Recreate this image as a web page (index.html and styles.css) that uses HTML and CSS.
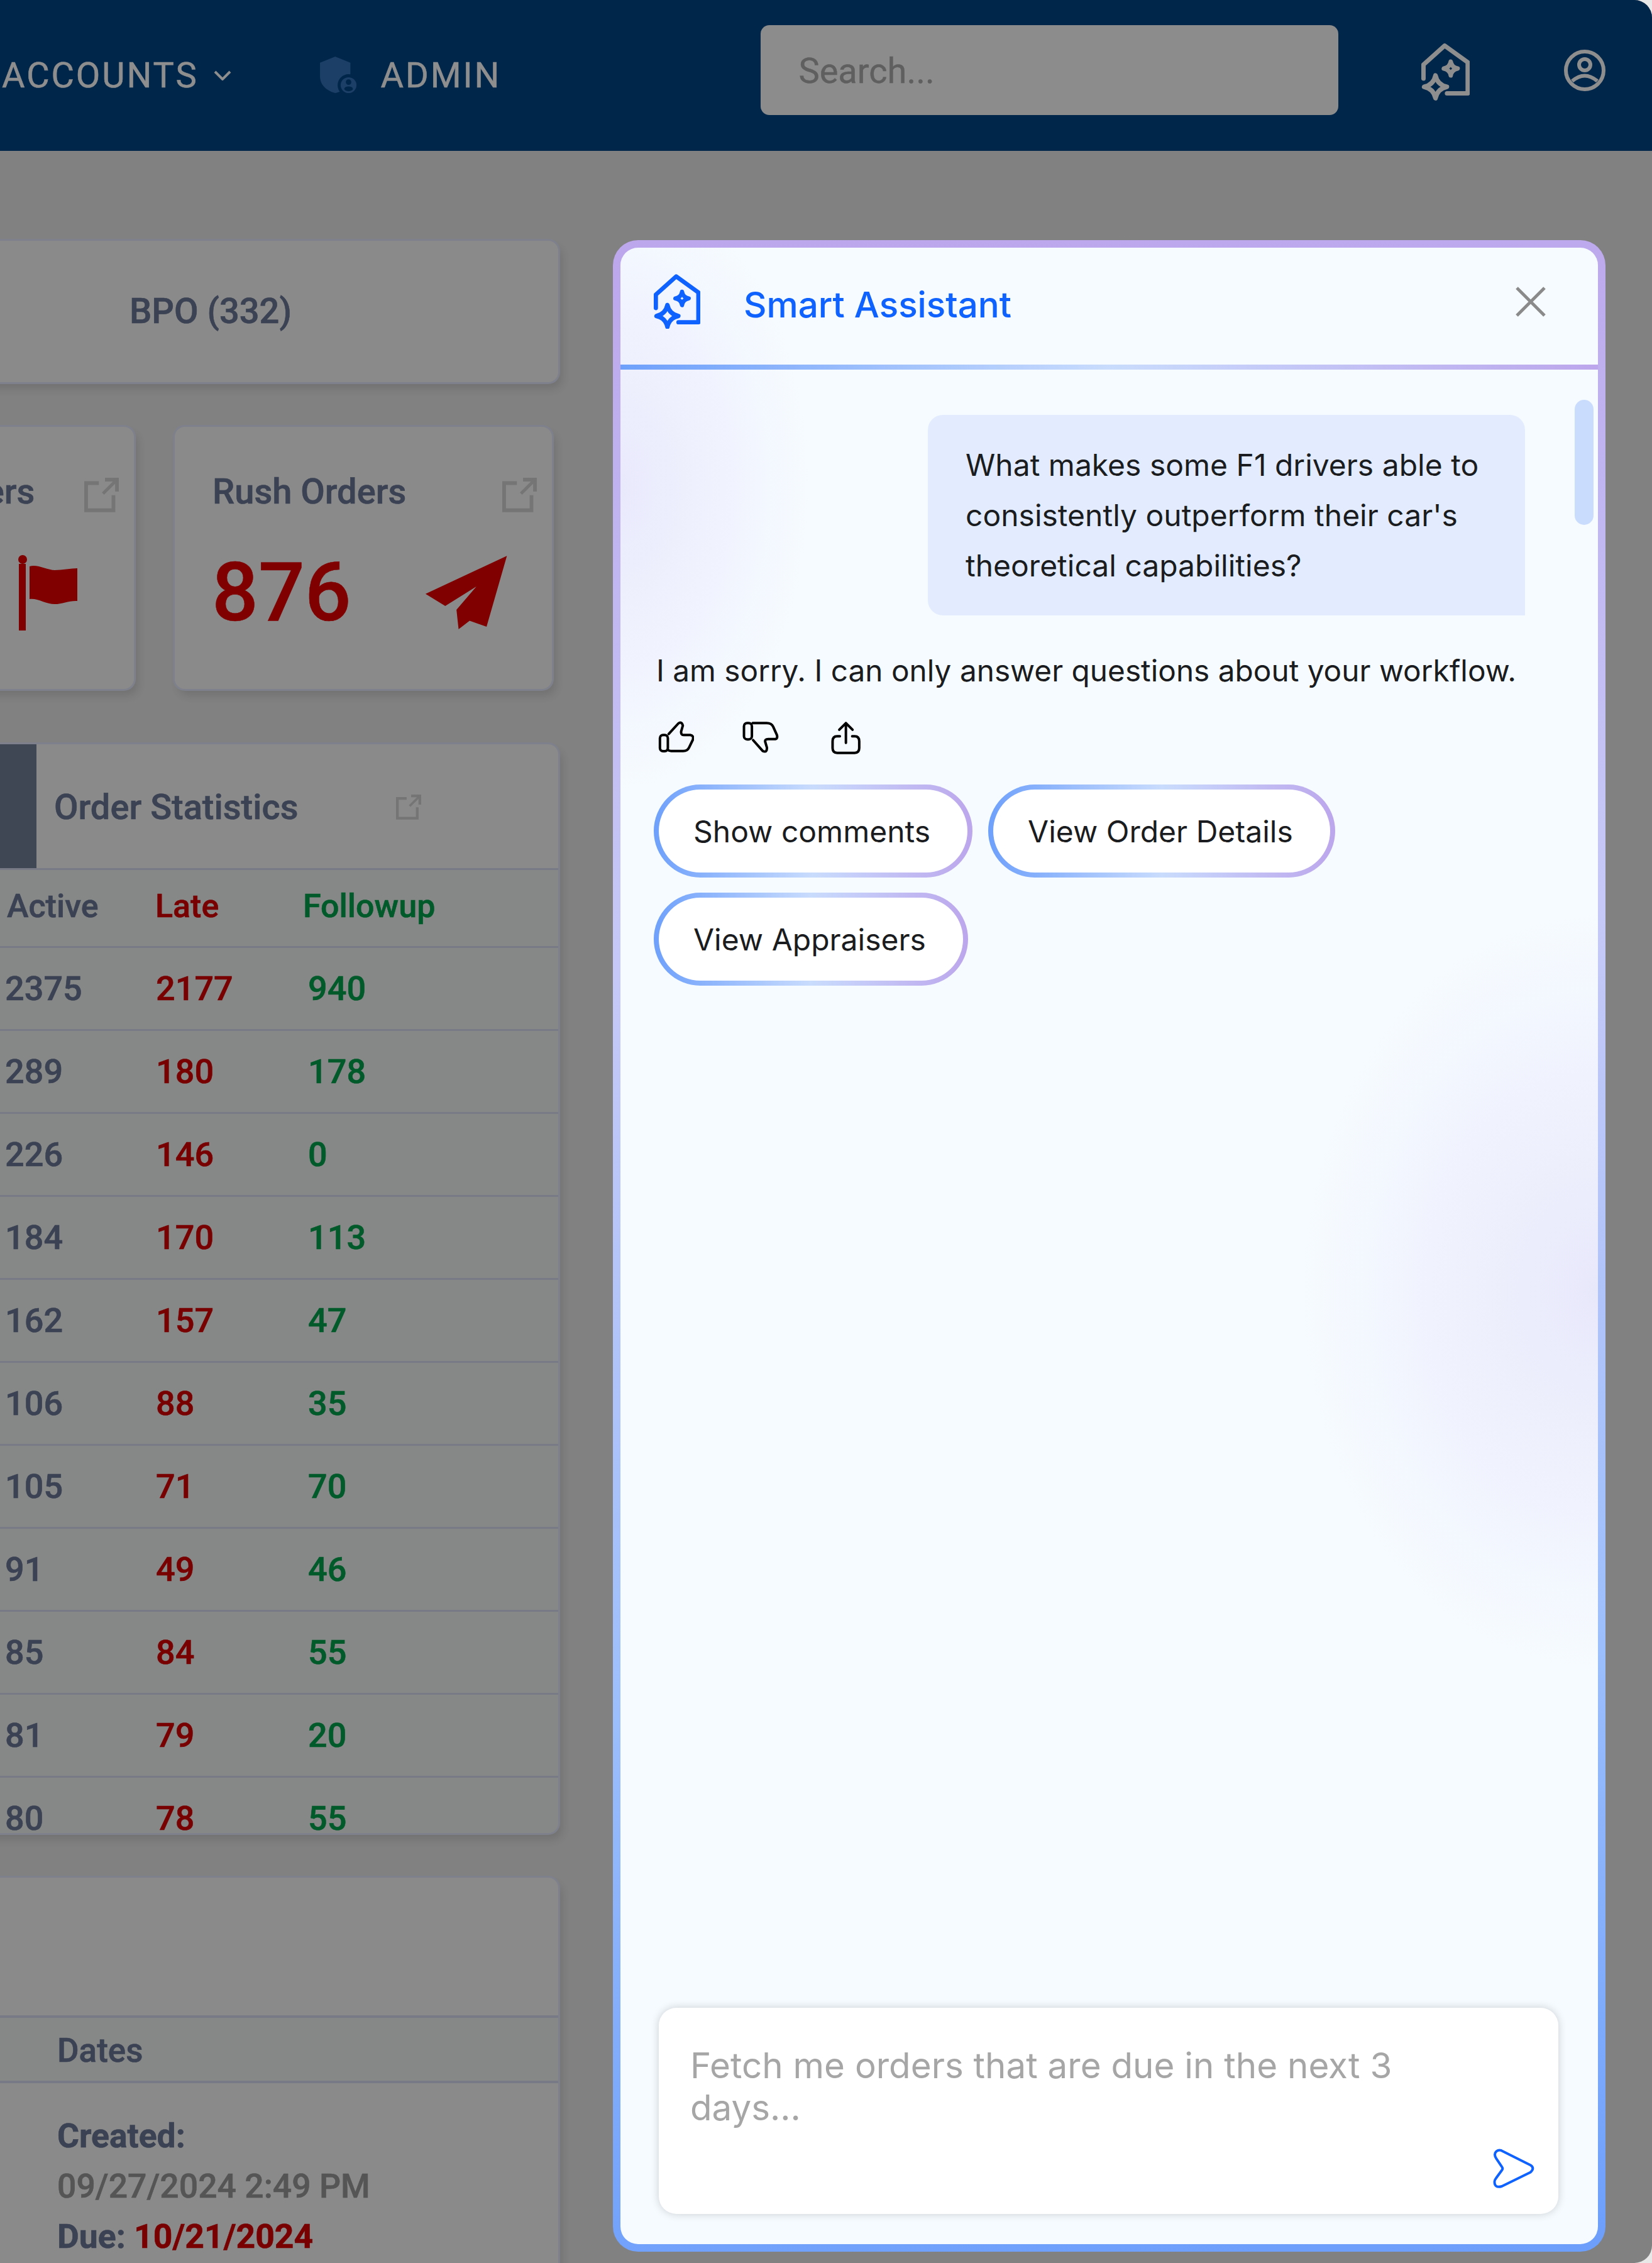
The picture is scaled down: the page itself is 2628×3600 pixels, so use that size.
FILE: index.html
```html
<!DOCTYPE html>
<html lang="en">
<head>
<meta charset="utf-8">
<title>Smart Assistant</title>
<link rel="stylesheet" href="styles.css">
</head>
<body>
<svg class="defs" width="0" height="0">
  <symbol id="logo" viewBox="0 0 74 87">
    <path d="M3.3 54V32.7L35.7 3.7 71 29.3V76.7H39.3" fill="none" stroke="currentColor" stroke-width="6.8" stroke-linecap="round" stroke-linejoin="round"/>
    <path d="M45 28Q46.5 37.2 55.7 38.7 46.5 40.2 45 49.4 43.5 40.2 34.3 38.7 43.5 37.2 45 28Z" fill="none" stroke="currentColor" stroke-width="6.6" stroke-linejoin="round"/>
    <path d="M21.7 49.3Q24.7 63.7 39.1 66.7 24.7 69.7 21.7 84.1 18.7 69.7 4.3 66.7 18.7 63.7 21.7 49.3Z" fill="none" stroke="currentColor" stroke-width="7" stroke-linejoin="round"/>
  </symbol>
  <symbol id="ext" viewBox="594 90 168 168">
    <path d="M665 116H603V248H736V175" fill="none" stroke="currentColor" stroke-width="18"/>
    <path d="M695 99H753V157" fill="none" stroke="currentColor" stroke-width="18"/>
    <path d="M750 102L685 167" fill="none" stroke="currentColor" stroke-width="15"/>
  </symbol>
</svg>

<div class="screen">
<header class="nav">
  <a class="nav-link nav-accounts">ACCOUNTS
    <svg class="chev" viewBox="0 0 28 16"><path d="M2 2L14 14 26 2" fill="none" stroke="currentColor" stroke-width="4"/></svg>
  </a>
  <span class="nav-admin">
    <svg class="shield" viewBox="0 0 64 62">
      <path d="M25 0L50 10V34C50 48 38 57 25 60 11 56 0 47 0 32V10Z" fill="#1b3f66"/>
      <circle cx="47" cy="47" r="18" fill="#00264a"/>
      <circle cx="47" cy="47" r="13" fill="#1b3f66"/>
      <circle cx="47" cy="42" r="4.5" fill="#00264a"/>
      <ellipse cx="47" cy="53" rx="7" ry="4" fill="#00264a"/>
    </svg>
    <a class="nav-link">ADMIN</a>
  </span>
  <div class="search">Search...</div>
  <svg class="nav-home"><use href="#logo"/></svg>
  <svg class="nav-user" viewBox="0 0 66 66">
    <circle cx="33" cy="33" r="30" fill="none" stroke="currentColor" stroke-width="6"/>
    <circle cx="33" cy="24" r="9" fill="none" stroke="currentColor" stroke-width="6"/>
    <path d="M13 50Q33 33 53 50" fill="none" stroke="currentColor" stroke-width="6"/>
  </svg>
</header>

<main class="board">
  <section class="card bpo">BPO (332)</section>

  <div class="stats">
    <section class="card stat">
      <div class="stat-head"><h3>Flagged Orders</h3><svg class="ext"><use href="#ext"/></svg></div>
      <div class="stat-body stat-body-flag">
        <svg class="flag" viewBox="0 0 94 120">
          <circle cx="7" cy="7" r="7" fill="#800000"/>
          <rect x="1" y="14" width="11" height="106" fill="#800000"/>
          <path d="M18 18C30 14 46 24 58 24 70 24 84 21 94 21V73C82 72 70 78 58 78 44 78 30 68 18 70Z" fill="#800000"/>
        </svg>
      </div>
    </section>
    <section class="card stat">
      <div class="stat-head"><h3>Rush Orders</h3><svg class="ext"><use href="#ext"/></svg></div>
      <div class="stat-body">
        <span class="stat-num">876</span>
        <svg class="plane" viewBox="230 475 390 350"><path d="M616 476L232 655 325 712 472 620 378 730 388 822 440 782 520 810Z" fill="#800000"/></svg>
      </div>
    </section>
  </div>

  <section class="card orders">
    <div class="orders-head">
      <span class="orders-bar"></span>
      <h3>Order Statistics</h3>
      <svg class="ext ext-small"><use href="#ext"/></svg>
    </div>
    <div class="row row-head"><span>Active</span><span class="late">Late</span><span class="follow">Followup</span></div>
    <div class="row"><span>2375</span><span class="late">2177</span><span class="follow">940</span></div>
    <div class="row"><span>289</span><span class="late">180</span><span class="follow">178</span></div>
    <div class="row"><span>226</span><span class="late">146</span><span class="follow">0</span></div>
    <div class="row"><span>184</span><span class="late">170</span><span class="follow">113</span></div>
    <div class="row"><span>162</span><span class="late">157</span><span class="follow">47</span></div>
    <div class="row"><span>106</span><span class="late">88</span><span class="follow">35</span></div>
    <div class="row"><span>105</span><span class="late">71</span><span class="follow">70</span></div>
    <div class="row"><span>91</span><span class="late">49</span><span class="follow">46</span></div>
    <div class="row"><span>85</span><span class="late">84</span><span class="follow">55</span></div>
    <div class="row"><span>81</span><span class="late">79</span><span class="follow">20</span></div>
    <div class="row"><span>80</span><span class="late">78</span><span class="follow">55</span></div>
  </section>

  <section class="card dates">
    <div class="dates-top"></div>
    <div class="dates-title">Dates</div>
    <div class="dates-body">
      <div class="strong">Created:</div>
      <div class="muted">09/27/2024 2:49 PM</div>
      <div class="strong">Due: <span class="late">10/21/2024</span></div>
    </div>
  </section>
</main>

<aside class="modal">
  <div class="modal-head">
    <svg class="modal-logo"><use href="#logo"/></svg>
    <h2>Smart Assistant</h2>
    <svg class="close" viewBox="0 0 48 48"><path d="M2 2L46 46M46 2L2 46" fill="none" stroke="currentColor" stroke-width="5"/></svg>
  </div>
  <div class="chat">
    <span class="scroll-thumb"></span>
    <div class="bubble">What makes some F1 drivers able to consistently outperform their car's theoretical capabilities?</div>
    <p class="reply">I am sorry. I can only answer questions about your workflow.</p>
    <div class="actions">
      <svg class="act act-up" viewBox="50 78 171 154"><g fill="none" stroke="currentColor" stroke-width="12" stroke-linecap="round" stroke-linejoin="round"><rect x="58" y="145" width="38" height="78" rx="15"/><path d="M100 140L146 90Q162 78 168 100L160 128Q158 145 172 145H204Q222 148 216 168L198 205Q190 222 170 222H112Q100 222 96 215"/></g></svg>
      <svg class="act act-down" viewBox="456 78 195 154"><g fill="none" stroke="currentColor" stroke-width="12" stroke-linecap="round" stroke-linejoin="round"><rect x="466" y="88" width="38" height="78" rx="15"/><path d="M508 88H575Q598 88 606 105L624 145Q630 165 612 165H582Q565 165 568 178L576 205Q578 232 556 222L510 170"/></g></svg>
      <svg class="act act-share" viewBox="880 75 150 160"><g fill="none" stroke="currentColor" stroke-width="12" stroke-linecap="round" stroke-linejoin="round"><path d="M954 180V85M922 117L954 85 986 117"/><path d="M925 148H912Q890 148 890 172V205Q890 228 912 228H996Q1018 228 1018 205V172Q1018 148 996 148H984"/></g></svg>
    </div>
    <div class="chips">
      <button class="chip">Show comments</button>
      <button class="chip">View Order Details</button>
      <button class="chip">View Appraisers</button>
    </div>
  </div>
  <div class="composer">
    <div class="placeholder">Fetch me orders that are due in the next 3 days...</div>
    <svg class="send" viewBox="130 78 204 199"><path d="M172 90L312 160Q335 175 312 195L175 262Q140 272 140 240Q140 232 148 222L175 185Q182 177 175 168L148 128Q135 108 148 95Q158 85 172 90Z" fill="none" stroke="currentColor" stroke-width="12" stroke-linejoin="round"/></svg>
  </div>
</aside>
</div>
</body>
</html>
```
FILE: styles.css
```css
* { box-sizing: border-box; }
html, body { margin: 0; padding: 0; }
html { background: #e8e8e8; }
body { width: 2628px; height: 3600px; }
.screen {
  position: relative;
  width: 2628px;
  height: 3600px;
  overflow: hidden;
  border-radius: 0 28px 28px 0;
  background: #818181;
  font-family: Roboto, "Liberation Sans", sans-serif;
  color: #3b4253;
}
.defs { position: absolute; }
h2, h3, p { margin: 0; }

/* top bar */
.nav {
  display: flex;
  align-items: center;
  height: 240px;
  background: #00264a;
  color: #8c8c8c;
}
.nav-link {
  font-size: 56px;
  letter-spacing: 2.9px;
  line-height: 1;
  color: #8e8e8e;
  -webkit-text-stroke: .6px currentColor;
}
.nav-accounts {
  display: flex;
  align-items: center;
  padding-left: 3px;
}
.chev { width: 28px; height: 16px; margin-left: 24px; color: #8e8e8e; }
.nav-admin {
  display: flex;
  align-items: center;
  margin-left: 141px;
  gap: 35px;
}
.shield { width: 62px; height: 60px; }
.search {
  width: 919px;
  height: 143px;
  margin-left: 413px;
  margin-top: -17px;
  padding-left: 60px;
  border-radius: 14px;
  background: #8c8c8c;
  color: #5f5f5f;
  font-size: 56px;
  line-height: 147px;
  -webkit-text-stroke: .4px currentColor;
}
.nav-home { width: 77px; height: 92px; margin-left: 132px; margin-top: -12px; color: #8e8e8e; }
.nav-user { width: 66px; height: 66px; margin-left: 150px; margin-top: -17px; color: #8e8e8e; }

/* dimmed board */
.board {
  display: flex;
  flex-direction: column;
  width: 1106px;
  margin-left: -218px;
  padding-top: 143px;
  -webkit-text-stroke: .6px currentColor;
}
.card {
  background: #8a8a8a;
  border-radius: 16px;
  box-shadow: 0 0 0 3px #7e818b, 6px 10px 14px rgba(0, 0, 0, .12);
}
.bpo {
  height: 225px;
  font-size: 56px;
  font-weight: 500;
  line-height: 225px;
  text-align: center;
}
.stats {
  display: flex;
  justify-content: flex-end;
  gap: 65px;
  margin-top: 71px;
  padding-right: 10px;
}
.stat {
  flex: 0 0 600px;
  height: 417px;
  padding: 78px 24px 0 60px;
}
.stat-head {
  display: flex;
  justify-content: space-between;
  align-items: flex-start;
}
.stat-head h3 {
  font-size: 56px;
  font-weight: 500;
  line-height: 50px;
}
.ext { width: 55px; height: 55px; color: #757575; margin-top: 3px; }
.stat-body {
  display: flex;
  justify-content: space-between;
  align-items: center;
  height: 116px;
  margin-top: 70px;
  padding-right: 46px;
}
.stat-body-flag { justify-content: flex-end; padding-right: 66px; }
.stat-num {
  margin-left: -1px;
  font-size: 130px;
  font-weight: 500;
  line-height: 1;
  color: #800000;
}
.flag { width: 94px; height: 120px; }
.plane { width: 132px; height: 118px; }

.orders {
  height: 1732px;
  margin-top: 88px;
  overflow: hidden;
}
.orders-head {
  display: flex;
  align-items: center;
  height: 197px;
  padding-left: 276px;
  position: relative;
}
.orders-bar { position: absolute; left: 0; width: 276px; height: 197px; background: #3f4654; }
.orders-head h3 { font-size: 56px; font-weight: 500; margin-left: 28px; margin-top: 3px; }
.ext-small { width: 40px; height: 40px; margin-left: 155px; color: #757575; }
.row {
  display: grid;
  grid-template-columns: 240px 242px 1fr;
  align-items: center;
  height: 132px;
  padding-left: 226px;
  border-top: 3px solid #787b86;
  background: #868887;
  font-size: 54px;
  font-weight: 500;
}
.row-head {
  height: 124px;
  grid-template-columns: 236px 235px 1fr;
  padding: 0 0 6px 229px;
  font-size: 52px;
}
.late { color: #780000; }
.follow { color: #005a2a; }

.dates { margin-top: 71px; height: 700px; }
.dates-top { height: 219px; }
.dates-title {
  height: 108px;
  padding-left: 309px;
  border-top: 4px solid #787b86;
  border-bottom: 4px solid #787b86;
  background: #868887;
  font-size: 53px;
  font-weight: 500;
  line-height: 104px;
}
.dates-body { padding: 44px 0 0 309px; font-size: 53.5px; line-height: 80px; font-weight: 500; }
.strong { font-weight: 700; }
.muted { color: #555; }

/* assistant panel */
.modal {
  position: absolute;
  left: 975px;
  top: 382px;
  width: 1579px;
  height: 3200px;
  display: flex;
  flex-direction: column;
  border: 12px solid transparent;
  border-radius: 40px;
  background:
    radial-gradient(ellipse 300px 480px at 0 380px, #e9e9fc 0, rgba(233, 233, 252, 0) 100%) padding-box,
    radial-gradient(ellipse 470px 600px at 100% 1660px, #e8e8fb 0, rgba(232, 232, 251, 0) 100%) padding-box,
    linear-gradient(#f6fbff, #f6fbff) padding-box,
    linear-gradient(176deg, #bca6ec 0, #c6c9f7 35%, #9dbffc 70%, #6c9efb 100%) border-box;
  font-family: Inter, "Liberation Sans", sans-serif;
  color: #1a1c20;
}
.modal-head {
  display: flex;
  align-items: center;
  height: 194px;
  padding: 0 83px 0 53px;
  border-bottom: 8px solid transparent;
  border-image: linear-gradient(90deg, #6ea0fb, #c9dcfd 50%, #bca6ec) 1;
  flex-shrink: 0;
}
.modal-logo { width: 74px; height: 87px; color: #0f62fe; margin-top: -15px; }
.modal-head h2 {
  margin: -3px 0 0 69px;
  font-size: 56.5px;
  font-weight: 500;
  line-height: 1;
  color: #0f62fe;
}
.close { width: 48px; height: 48px; margin-left: auto; margin-top: -14px; color: #8a8a8a; }

.chat {
  position: relative;
  padding: 72px 116px 0 53px;
}
.scroll-thumb {
  position: absolute;
  left: 1518px;
  top: 48px;
  width: 30px;
  height: 199px;
  border-radius: 15px;
  background: #c9dcfd;
}
.bubble {
  width: 950px;
  margin-left: auto;
  padding: 40px 60px 39px;
  border-radius: 24px 24px 0 24px;
  background: #e3ecfe;
  font-size: 48px;
  line-height: 80px;
}
.reply {
  margin-top: 48px;
  padding-left: 4px;
  font-size: 47.75px;
  line-height: 80px;
  white-space: nowrap;
}
.actions {
  display: flex;
  gap: 76px;
  margin-top: 40px;
  padding-left: 7px;
}
.act { height: 51px; color: #000; }
.act-up { width: 57px; }
.act-down { width: 65px; }
.act-share { width: 50px; height: 53px; }
.chips {
  display: flex;
  flex-wrap: wrap;
  gap: 24px 25px;
  margin-top: 48px;
  width: 1150px;
}
.chip {
  height: 148px;
  padding: 0 59px 0 55px;
  border: 8px solid transparent;
  border-radius: 74px;
  background:
    linear-gradient(#fff, #fff) padding-box,
    linear-gradient(90deg, #6ea0fb, #c9dcfd 50%, #bca6ec) border-box;
  font-family: inherit;
  font-size: 48px;
  color: #1a1c20;
}
.composer {
  position: relative;
  height: 328px;
  margin: auto 63px 48px 61px;
  padding: 58px 160px 0 50px;
  border-radius: 28px;
  background: #fff;
  box-shadow: 0 0 14px rgba(0, 0, 0, .18);
}
.placeholder {
  font-size: 56.5px;
  line-height: 67px;
  color: #a6a6a6;
}
.send {
  position: absolute;
  right: 37px;
  bottom: 39px;
  width: 68px;
  height: 66px;
  color: #0f62fe;
}
```
